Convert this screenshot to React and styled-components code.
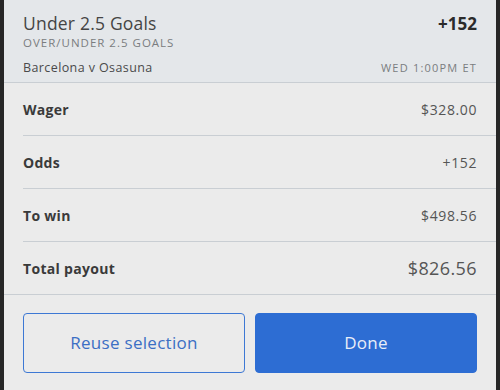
import React from 'react';
import styled, { createGlobalStyle } from 'styled-components';

const GlobalStyle = createGlobalStyle`
  html, body {
    margin: 0;
    padding: 0;
    background: #262626;
  }
  body {
    font-family: "Open Sans", Lato, sans-serif;
  }
`

const rows = [
  { label: 'Wager', value: '$328.00' },
  { label: 'Odds', value: '+152' },
  { label: 'To win', value: '$498.56' },
  { label: 'Total payout', value: '$826.56', big: true },
]

const App = () => {
  return (
    <>
      <GlobalStyle />
      <Panel>
        <Header>
          <TopLine>
            <Title>Under 2.5 Goals</Title>
            <Price>+152</Price>
          </TopLine>
          <Market>Over/Under 2.5 Goals</Market>
          <EventLine>
            <Teams>Barcelona v Osasuna</Teams>
            <Kickoff>Wed 1:00PM ET</Kickoff>
          </EventLine>
        </Header>
        <Summary>
          {rows.map(row => (
            <Row key={row.label}>
              <Label>{row.label}</Label>
              <Value big={row.big}>{row.value}</Value>
            </Row>
          ))}
        </Summary>
        <Actions>
          <Button type='button' variant='outline'>Reuse selection</Button>
          <Button type='button'>Done</Button>
        </Actions>
      </Panel>
    </>
  );
}

export default App;


const Panel = styled.div`
    margin: 0 4px;
    height: 390px;
    background: #ebebeb;
    display: flex;
    flex-direction: column;
`
const Header = styled.div`
    background: #e4e7ea;
    padding: 12px 19px 0 19px;
    height: 70px;
    border-bottom: 1px solid #c9ced3;
`
const TopLine = styled.div`
    display: flex;
    justify-content: space-between;
    align-items: baseline;
`
const Title = styled.div`
    font-size: 17.5px;
    letter-spacing: 0.2px;
    color: #444;
    line-height: 22px;
`
const Price = styled.div`
    font-size: 17px;
    font-weight: 700;
    color: #2b2b2b;
`
const Market = styled.div`
    font-size: 11.5px;
    letter-spacing: 1px;
    text-transform: uppercase;
    color: #7a7d80;
    line-height: 14px;
    margin-top: 1px;
`
const EventLine = styled.div`
    display: flex;
    justify-content: space-between;
    align-items: baseline;
    margin-top: 9px;
`
const Teams = styled.div`
    font-size: 12.5px;
    letter-spacing: 0.4px;
    color: #4a4a4a;
`
const Kickoff = styled.div`
    font-size: 11px;
    letter-spacing: 1.2px;
    text-transform: uppercase;
    color: #7a7d80;
`
const Summary = styled.div`
    padding-left: 19px;
    border-bottom: 1px solid #c9ced3;
`
const Row = styled.div`
    display: flex;
    justify-content: space-between;
    align-items: center;
    height: 52px;
    padding-right: 19px;
    border-bottom: 1px solid #c9ced3;
    &:last-child{
      border-bottom: none;
    }
`
const Label = styled.div`
    font-size: 14px;
    font-weight: 700;
    letter-spacing: 0.3px;
    color: #3a3a3a;
`
const Value = styled.div`
    font-size: ${p => p.big ? '18px' : '14px'};
    letter-spacing: ${p => p.big ? '0.4px' : '0.6px'};
    color: #555;
`
const Actions = styled.div`
    display: grid;
    grid-template-columns: 1fr 1fr;
    gap: 10px;
    padding: 18px 19px 0 19px;
`
const Button = styled.button`
    height: 60px;
    padding-bottom: 2px;
    border-radius: 4px;
    font-family: "Open Sans", Lato, sans-serif;
    font-size: 17px;
    letter-spacing: 0.3px;
    cursor: pointer;
    border: 1px solid ${p => p.variant === 'outline' ? '#3d78d4' : '#2d6dd3'};
    background: ${p => p.variant === 'outline' ? 'transparent' : '#2d6dd3'};
    color: ${p => p.variant === 'outline' ? '#3b6fc4' : '#e8eef8'};
`
